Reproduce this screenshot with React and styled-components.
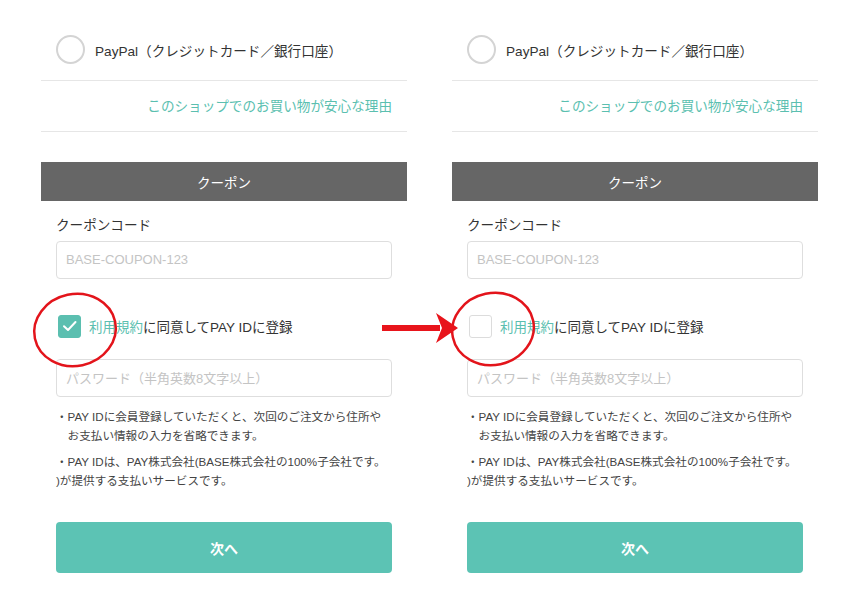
import React from 'react';
import styled, { createGlobalStyle } from 'styled-components';

const GlobalStyle = createGlobalStyle`
  html, body {
    margin: 0;
    padding: 0;
    background: #ffffff;
  }
  body {
    font-family: "Liberation Sans", "Noto Sans CJK JP", sans-serif;
    color: #333333;
  }
`;

const TEAL = '#5bbfb0';

const Page = styled.div`
  position: relative;
  width: 853px;
  height: 600px;
  overflow: hidden;
  display: flex;
  gap: 45px;
  padding: 19px 0 0 41px;
  box-sizing: border-box;
`;

const Panel = styled.div`
  width: 366px;
  display: flex;
  flex-direction: column;
`;

const RadioRow = styled.div`
  height: 61px;
  display: flex;
  align-items: center;
  gap: 10px;
  padding-left: 15px;
  border-bottom: 1px solid #e6e6e6;
  font-size: 13.6px;
  color: #333;
`;

const Radio = styled.span`
  width: 29px;
  height: 29px;
  box-sizing: border-box;
  border-radius: 50%;
  border: 2px solid #d4d4d4;
  background: #fff;
`;

const LinkRow = styled.div`
  height: 51px;
  display: flex;
  align-items: center;
  justify-content: flex-end;
  padding-right: 15px;
  padding-bottom: 2px;
  box-sizing: border-box;
  border-bottom: 1px solid #e6e6e6;
  font-size: 13.6px;
  color: ${TEAL};
`;

const SectionHeader = styled.div`
  margin-top: 30px;
  height: 39px;
  background: #666666;
  color: #ffffff;
  font-size: 13.5px;
  display: flex;
  align-items: center;
  justify-content: center;
`;

const Body = styled.div`
  padding: 0 15px;
  display: flex;
  flex-direction: column;
`;

const Label = styled.div`
  margin-top: 16px;
  line-height: 18px;
  font-size: 13.6px;
  color: #333;
`;

const Field = styled.div`
  margin-top: ${(p) => p.$top}px;
  height: 38px;
  box-sizing: border-box;
  border: 1px solid #dedede;
  border-radius: 4px;
  display: flex;
  align-items: center;
  padding: 0 0 2px 9px;
  font-size: 13px;
  color: #c4c4c4;
`;

const CheckRow = styled.div`
  margin-top: 35px;
  height: 24px;
  display: flex;
  align-items: center;
  gap: 8px;
  padding-left: 2px;
  font-size: 13.5px;
  color: #333;
`;

const Checkbox = styled.span`
  width: 23px;
  height: 23px;
  box-sizing: border-box;
  border-radius: 3px;
  display: flex;
  align-items: center;
  justify-content: center;
  background: ${(p) => (p.$checked ? TEAL : '#fff')};
  border: 1px solid ${(p) => (p.$checked ? TEAL : '#dcdcdc')};
`;

const Link = styled.span`
  color: ${TEAL};
`;

const Notes = styled.div`
  margin-top: 10px;
  display: flex;
  flex-direction: column;
  gap: 7px;
  font-size: 11.6px;
  line-height: 19px;
  color: #444;
`;

const NoteLine = styled.div`
  white-space: nowrap;
  padding-left: ${(p) => (p.$indent ? '11.6px' : '0')};
`;

const NextButton = styled.button`
  margin-top: 32px;
  height: 51px;
  border: none;
  border-radius: 4px;
  background: #5cc3b4;
  color: #fff;
  font-family: inherit;
  font-size: 14px;
  font-weight: bold;
`;

const Overlay = styled.svg`
  position: absolute;
  left: 0;
  top: 0;
  pointer-events: none;
`;

function CheckMark() {
  return (
    <svg width="15" height="12" viewBox="0 0 15 12">
      <path d="M2 6.2 L6 10 L13.5 2" fill="none" stroke="#fff" strokeWidth="2" strokeLinecap="round" strokeLinejoin="round" />
    </svg>
  );
}

function PaymentPanel({ checked }) {
  return (
    <Panel>
      <RadioRow>
        <Radio />
        <span>PayPal（クレジットカード／銀行口座）</span>
      </RadioRow>
      <LinkRow>このショップでのお買い物が安心な理由</LinkRow>
      <SectionHeader>クーポン</SectionHeader>
      <Body>
        <Label>クーポンコード</Label>
        <Field $top={6}>BASE-COUPON-123</Field>
        <CheckRow>
          <Checkbox $checked={checked}>{checked && <CheckMark />}</Checkbox>
          <span>
            <Link>利用規約</Link>に同意してPAY IDに登録
          </span>
        </CheckRow>
        <Field $top={21}>パスワード（半角英数8文字以上）</Field>
        <Notes>
          <div>
            <NoteLine>・PAY IDに会員登録していただくと、次回のご注文から住所や</NoteLine>
            <NoteLine $indent>お支払い情報の入力を省略できます。</NoteLine>
          </div>
          <div>
            <NoteLine>・PAY IDは、PAY株式会社(BASE株式会社の100%子会社です。</NoteLine>
            <NoteLine>)が提供する支払いサービスです。</NoteLine>
          </div>
        </Notes>
        <NextButton>次へ</NextButton>
      </Body>
    </Panel>
  );
}

export default function App() {
  return (
    <>
      <GlobalStyle />
      <Page>
        <PaymentPanel checked />
        <PaymentPanel checked={false} />
        <Overlay width="853" height="600" viewBox="0 0 853 600">
          <ellipse cx="75" cy="330" rx="41" ry="36" fill="none" stroke="#e3141b" strokeWidth="2.5" transform="rotate(-12 75 330)" />
          <ellipse cx="493" cy="329" rx="41" ry="36" fill="none" stroke="#e3141b" strokeWidth="2.5" transform="rotate(-12 493 329)" />
          <rect x="382" y="325" width="58" height="6" fill="#e8141b" />
          <polygon points="436,313 458,328 436,343 442,328" fill="#e8141b" />
        </Overlay>
      </Page>
    </>
  );
}
